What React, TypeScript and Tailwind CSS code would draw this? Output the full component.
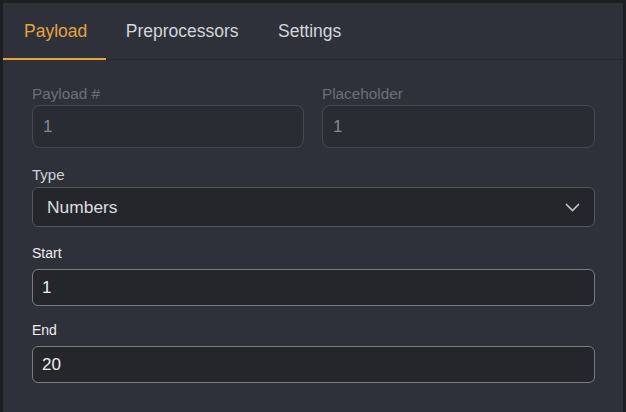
import React from "react";

export default function App() {
  const font = { fontFamily: '"Liberation Sans", Arial, sans-serif' };
  return (
    <div className="w-[626px] h-[412px] bg-[#1e1f23] pt-[3px] pl-[3px] pr-[3px] overflow-hidden" style={font}>
      <div className="h-full bg-[#2f313a] flex flex-col">
        <div className="h-[57px] flex border-b border-[#262830]">
          <div className="pl-[21px] pr-[19px] flex items-center text-[17.5px] text-[#e5a33f] border-b-2 border-[#e8a33a] -mb-px pt-[2px]">Payload</div>
          <div className="px-[19.5px] flex items-center text-[17.5px] text-[#d3d5da] pt-[1px]">Preprocessors</div>
          <div className="px-[20px] flex items-center text-[17.5px] text-[#d3d5da] pt-[1px]">Settings</div>
        </div>
        <div className="pl-[29px] pr-[28px] pt-[25px]">
          <div className="grid grid-cols-[272px_1fr] gap-[18px]">
            <div>
              <div className="text-[15.3px] leading-[17px] text-[#6c6f78] mb-[3px]">Payload #</div>
              <div className="h-[43px] rounded-lg border border-[#464850] bg-[#2a2c33] flex items-center pl-[10px] text-[17px] text-[#878a92]">1</div>
            </div>
            <div>
              <div className="text-[15.3px] leading-[17px] text-[#6c6f78] mb-[3px]">Placeholder</div>
              <div className="h-[43px] rounded-lg border border-[#464850] bg-[#2a2c33] flex items-center pl-[10px] text-[17px] text-[#878a92]">1</div>
            </div>
          </div>
          <div className="mt-[18px] text-[15px] leading-[17px] text-[#d0d2d7] mb-[4px]">Type</div>
          <div className="h-[40px] rounded-md border border-[#55575d] bg-[#25262b] flex items-center justify-between pl-[14px] pr-[14px] text-[17.4px] text-[#dcdee2]">
            <span>Numbers</span>
            <svg width="15" height="9" viewBox="0 0 15 9" fill="none">
              <path d="M1 1 L7.5 7.5 L14 1" stroke="#c3c5ca" strokeWidth="1.6" />
            </svg>
          </div>
          <div className="mt-[19px] text-[14px] leading-[15px] text-[#eceef0] mb-[8px]">Start</div>
          <div className="h-[37px] rounded-md border border-[#7b7c80] bg-[#25262b] flex items-center pl-[9px] text-[17px] text-[#eceef0]">1</div>
          <div className="mt-[17px] text-[14px] leading-[15px] text-[#eceef0] mb-[8px]">End</div>
          <div className="h-[37px] rounded-md border border-[#7b7c80] bg-[#25262b] flex items-center pl-[9px] text-[17px] text-[#eceef0]">20</div>
        </div>
      </div>
    </div>
  );
}
